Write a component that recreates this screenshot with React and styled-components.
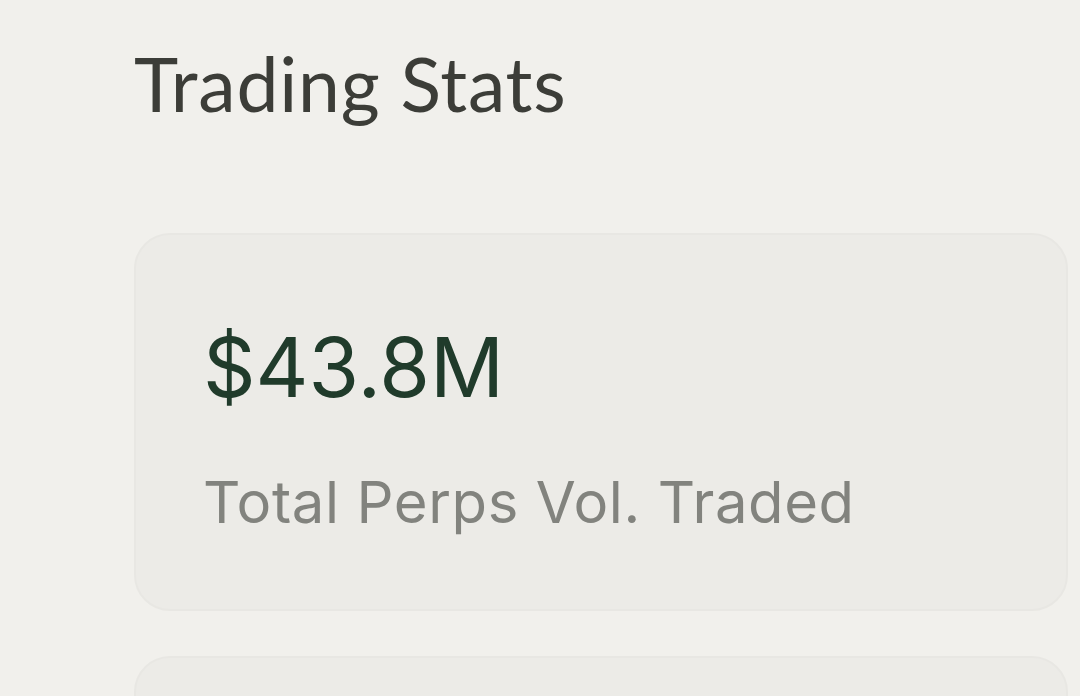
import styled, { createGlobalStyle } from 'styled-components';

const GlobalStyle = createGlobalStyle`
  html, body {
    margin: 0;
    padding: 0;
    background: #f1f0ec;
  }
  body {
    font-family: 'Inter', 'Liberation Sans', sans-serif;
    overflow: hidden;
  }
`;

const Page = styled.div`
  height: 696px;
  padding: 37px 12px 0 134px;
  box-sizing: border-box;
`;

const Title = styled.h1`
  margin: 0;
  font-family: 'Lato', sans-serif;
  font-size: 75px;
  font-weight: 400;
  line-height: 92px;
  letter-spacing: 0.8px;
  color: #3c3d38;
`;

const CardList = styled.div`
  display: flex;
  flex-direction: column;
  gap: 45px;
  margin-top: 104px;
`;

const Card = styled.div`
  background: #ecebe7;
  border: 2px solid #e8e7e3;
  border-radius: 36px;
  height: 378px;
  box-sizing: border-box;
  padding: 88px 0 0 67px;
`;

const Value = styled.div`
  font-size: 82px;
  line-height: 90px;
  letter-spacing: 0;
  color: #203b2b;
`;

const Label = styled.div`
  margin-top: 54px;
  font-size: 58px;
  line-height: 70px;
  letter-spacing: 0.6px;
  color: #82837e;
`;

const stats = [
  { value: '$43.8M', label: 'Total Perps Vol. Traded' },
];

export default function App() {
  return (
    <>
      <GlobalStyle />
      <Page>
        <Title>Trading Stats</Title>
        <CardList>
          {stats.map(s => (
            <Card key={s.label}>
              <Value>{s.value}</Value>
              <Label>{s.label}</Label>
            </Card>
          ))}
          <Card />
        </CardList>
      </Page>
    </>
  );
}
